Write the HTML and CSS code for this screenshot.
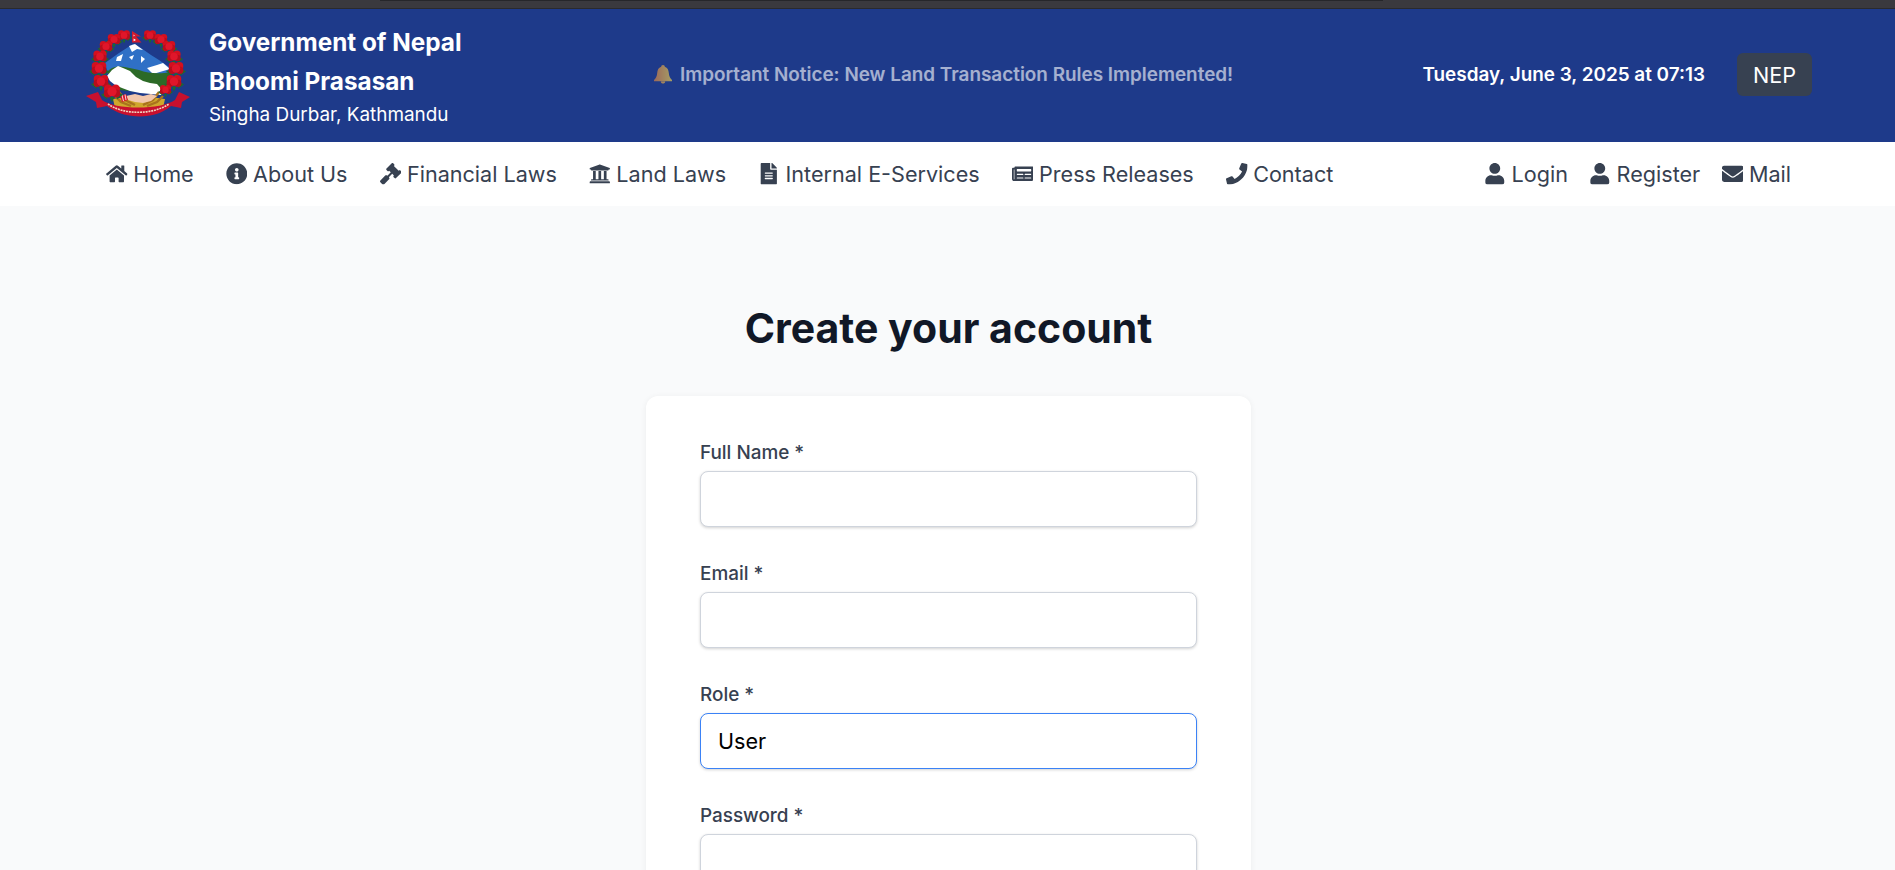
FILE: index.html
```html
<!DOCTYPE html>
<html lang="en">
<head>
<meta charset="utf-8">
<title>Create your account - Bhoomi Prasasan</title>
<link rel="stylesheet" href="styles.css">
</head>
<body>
<svg class="defs" width="0" height="0" aria-hidden="true">
  <symbol id="i-home" viewBox="0 0 576 512"><path d="M280.37 148.26L96 300.11V464a16 16 0 0 0 16 16l112.06-.29a16 16 0 0 0 15.92-16V368a16 16 0 0 1 16-16h64a16 16 0 0 1 16 16v95.64a16 16 0 0 0 16 16.05L464 480a16 16 0 0 0 16-16V300L295.67 148.26a12.19 12.19 0 0 0-15.3 0zM571.6 251.47L488 182.56V44.05a12 12 0 0 0-12-12h-56a12 12 0 0 0-12 12v72.61L318.47 43a48 48 0 0 0-61 0L4.34 251.47a12 12 0 0 0-1.6 16.9l25.5 31A12 12 0 0 0 45.15 301l235.22-193.74a12.19 12.19 0 0 1 15.3 0L530.9 301a12 12 0 0 0 16.9-1.6l25.5-31a12 12 0 0 0-1.7-16.93z"/></symbol>
  <symbol id="i-info" viewBox="0 0 512 512"><path d="M256 8C119.043 8 8 119.083 8 256c0 136.997 111.043 248 248 248s248-111.003 248-248C504 119.083 392.957 8 256 8zm0 110c23.196 0 42 18.804 42 42s-18.804 42-42 42-42-18.804-42-42 18.804-42 42-42zm56 254c0 6.627-5.373 12-12 12h-88c-6.627 0-12-5.373-12-12v-24c0-6.627 5.373-12 12-12h12v-64h-12c-6.627 0-12-5.373-12-12v-24c0-6.627 5.373-12 12-12h64c6.627 0 12 5.373 12 12v100h12c6.627 0 12 5.373 12 12v24z"/></symbol>
  <symbol id="i-gavel" viewBox="0 0 512 512"><path d="M504.971 199.362l-22.627-22.627c-9.373-9.373-24.569-9.373-33.941 0l-5.657 5.657L329.608 69.255l5.657-5.657c9.373-9.373 9.373-24.569 0-33.941L312.638 7.029c-9.373-9.373-24.569-9.373-33.941 0L154.246 131.48c-9.373 9.373-9.373 24.569 0 33.941l22.627 22.627c9.373 9.373 24.569 9.373 33.941 0l5.657-5.657 39.598 39.598-81.04 81.04-5.657-5.657c-12.497-12.497-32.758-12.497-45.255 0L9.373 412.118c-12.497 12.497-12.497 32.758 0 45.255l45.255 45.255c12.497 12.497 32.758 12.497 45.255 0l114.745-114.745c12.497-12.497 12.497-32.758 0-45.255l-5.657-5.657 81.04-81.04 39.598 39.598-5.657 5.657c-9.373 9.373-9.373 24.569 0 33.941l22.627 22.627c9.373 9.373 24.569 9.373 33.941 0l124.451-124.451c9.372-9.372 9.372-24.568 0-33.941z"/></symbol>
  <symbol id="i-bank" viewBox="0 0 512 512"><path d="M496 128v16a8 8 0 0 1-8 8h-24v12c0 6.627-5.373 12-12 12H60c-6.627 0-12-5.373-12-12v-12H24a8 8 0 0 1-8-8v-16a8 8 0 0 1 4.941-7.392l232-88a7.996 7.996 0 0 1 6.118 0l232 88A8 8 0 0 1 496 128zm-24 304H40c-13.255 0-24 10.745-24 24v16a8 8 0 0 0 8 8h464a8 8 0 0 0 8-8v-16c0-13.255-10.745-24-24-24zM96 192v192H60c-6.627 0-12 5.373-12 12v20h416v-20c0-6.627-5.373-12-12-12h-36V192h-64v192h-64V192h-64v192h-64V192H96z"/></symbol>
  <symbol id="i-file" viewBox="0 0 384 512"><path d="M224 136V0H24C10.7 0 0 10.7 0 24v464c0 13.3 10.7 24 24 24h336c13.3 0 24-10.7 24-24V160H248c-13.2 0-24-10.8-24-24zm64 236c0 6.6-5.4 12-12 12H108c-6.6 0-12-5.4-12-12v-8c0-6.6 5.4-12 12-12h168c6.6 0 12 5.4 12 12v8zm0-64c0 6.6-5.4 12-12 12H108c-6.6 0-12-5.4-12-12v-8c0-6.6 5.4-12 12-12h168c6.6 0 12 5.4 12 12v8zm0-72v8c0 6.6-5.4 12-12 12H108c-6.6 0-12-5.4-12-12v-8c0-6.6 5.4-12 12-12h168c6.6 0 12 5.4 12 12zm96-114.1v6.1H256V0h6.1c6.4 0 12.5 2.5 17 7l97.9 98c4.5 4.5 7 10.6 7 16.9z"/></symbol>
  <symbol id="i-news" viewBox="0 0 576 512"><path d="M552 64H88c-13.255 0-24 10.745-24 24v8H24c-13.255 0-24 10.745-24 24v272c0 30.928 25.072 56 56 56h472c26.51 0 48-21.49 48-48V88c0-13.255-10.745-24-24-24zM56 400a8 8 0 0 1-8-8V144h16v248a8 8 0 0 1-8 8zm236-16H140c-6.627 0-12-5.373-12-12v-8c0-6.627 5.373-12 12-12h152c6.627 0 12 5.373 12 12v8c0 6.627-5.373 12-12 12zm208 0H348c-6.627 0-12-5.373-12-12v-8c0-6.627 5.373-12 12-12h152c6.627 0 12 5.373 12 12v8c0 6.627-5.373 12-12 12zm-208-96H140c-6.627 0-12-5.373-12-12v-8c0-6.627 5.373-12 12-12h152c6.627 0 12 5.373 12 12v8c0 6.627-5.373 12-12 12zm208 0H348c-6.627 0-12-5.373-12-12v-8c0-6.627 5.373-12 12-12h152c6.627 0 12 5.373 12 12v8c0 6.627-5.373 12-12 12zm0-96H140c-6.627 0-12-5.373-12-12v-40c0-6.627 5.373-12 12-12h360c6.627 0 12 5.373 12 12v40c0 6.627-5.373 12-12 12z"/></symbol>
  <symbol id="i-phone" viewBox="0 0 512 512"><path d="M493.4 24.6l-104-24c-11.3-2.6-22.9 3.3-27.5 13.9l-48 112c-4.2 9.8-1.4 21.3 6.9 28l60.6 49.6c-36 76.7-98.9 140.5-177.2 177.2l-49.6-60.6c-6.8-8.3-18.2-11.1-28-6.9l-112 48C3.9 366.5-2 378.1.6 389.4l24 104C27.1 504.2 36.7 512 48 512c256.1 0 464-207.5 464-464 0-11.2-7.7-20.9-18.6-23.4z"/></symbol>
  <symbol id="i-user" viewBox="0 0 448 512"><path d="M224 256c70.7 0 128-57.3 128-128S294.7 0 224 0 96 57.3 96 128s57.3 128 128 128zm89.6 32h-16.7c-22.2 10.2-46.9 16-72.9 16s-50.6-5.8-72.9-16h-16.7C60.2 288 0 348.2 0 422.4V464c0 26.5 21.5 48 48 48h352c26.5 0 48-21.5 48-48v-41.6c0-74.2-60.2-134.4-134.4-134.4z"/></symbol>
  <symbol id="i-mail" viewBox="0 0 512 512"><path d="M502.3 190.8c3.9-3.1 9.7-.2 9.7 4.7V400c0 26.5-21.5 48-48 48H48c-26.5 0-48-21.5-48-48V195.6c0-5 5.7-7.8 9.7-4.7 22.4 17.4 52.1 39.5 154.1 113.6 21.1 15.4 56.7 47.8 92.2 47.6 35.7.3 72-32.8 92.3-47.6 102-74.1 131.6-96.3 154-113.7zM256 320c23.2.4 56.6-29.2 73.4-41.4 132.7-96.3 142.8-104.7 173.4-128.7 5.8-4.5 9.2-11.5 9.2-18.9v-19c0-26.5-21.5-48-48-48H48C21.5 64 0 85.5 0 112v19c0 7.4 3.4 14.3 9.2 18.9 30.6 23.9 40.7 32.4 173.4 128.7 16.8 12.2 50.2 41.8 73.4 41.4z"/></symbol>
  <symbol id="flower" viewBox="-9 -9 18 18" overflow="visible">
    <path d="M-9 3 L-3 0 L-4 7 Z M9 3 L3 0 L4 7 Z M-2 5 L0 9.5 L2 5 Z" fill="#1d6b2c"/>
    <circle cx="-3" cy="-1.8" r="3.6" fill="#d40f1e"/><circle cx="3" cy="-1.8" r="3.6" fill="#d40f1e"/><circle cx="-3.4" cy="2" r="3.3" fill="#b80d1c"/><circle cx="3.4" cy="2" r="3.3" fill="#b80d1c"/><circle cx="0" cy="0.5" r="3.8" fill="#e0162a"/>
  </symbol>
</svg>

<div class="chrome"><div class="chrome-tab"></div></div>

<header class="banner">
  <div class="brand">
    <svg class="emblem" viewBox="0 0 108 92" aria-label="Emblem of Nepal">
      <path d="M20 33 L34 23 L48 14 L56 18 L66 25 L74 30 L87 39 L82 48 L24 48 Z" fill="#2f70c6"/>
      <path d="M44 16 L50 14 L58 20 L52 19 L47 22 Z M32 27 L38 24 L36 31 L31 31 Z M56 26 L60 29 L56 33 Z M44 27 L49 25 L47 30 Z M62 38 L72 35 L78 33 L85 39 L68 44 Z" fill="#fff"/>
      <path d="M22 42 C30 32 44 38 54 40 C64 44 76 44 86 42 L86 58 L74 64 L34 60 Z" fill="#2c6a27"/>
      <path d="M22 46 L27 40 L33 36 L38 38 L45 41 L51 47 L58 51 L65 53 L72 54 L79 62 L76 65 L66 64 L55 63 L45 61 L37 58 L30 55 L25 51 Z" fill="#fff"/>
      <use href="#flower" x="31" y="-3" width="16" height="16"/><use href="#flower" x="57" y="-3" width="16" height="16"/>
      <use href="#flower" x="20.5" y="0.5" width="17" height="17"/><use href="#flower" x="67.5" y="0.5" width="17" height="17"/>
      <use href="#flower" x="12.5" y="7.5" width="17" height="17"/><use href="#flower" x="75.5" y="7.5" width="17" height="17"/>
      <use href="#flower" x="6" y="17" width="18" height="18"/><use href="#flower" x="80" y="17" width="18" height="18"/>
      <use href="#flower" x="4" y="28" width="20" height="20"/><use href="#flower" x="81" y="28" width="20" height="20"/>
      <use href="#flower" x="6" y="41" width="20" height="20"/><use href="#flower" x="79" y="41" width="20" height="20"/>
      <path d="M28 69 C36 67 70 67 80 69 L78 78 C66 84 42 84 30 78 Z" fill="#cfa72c"/>
      <path d="M30 66 L36 72 L46 76 M34 62 L40 70 L50 75 M78 66 L72 72 L62 76 M74 62 L68 70 L58 75" stroke="#a9721d" stroke-width="2.4" fill="none"/>
      <path d="M41 66 L50 64 L58 66 L66 64 L72 66 L66 71 L58 73 L50 72 L43 70 Z" fill="#f2c7ac"/>
      <path d="M35 66 L41 64 L43 70 L37 72 Z" fill="#d61a2c"/><path d="M37 65 L38.5 71 M40 64.5 L41 70" stroke="#fff" stroke-width="0.8"/>
      <use href="#flower" x="16" y="50" width="22" height="22"/>
      <use href="#flower" x="73" y="52" width="15" height="15"/>
      <path d="M1 66 L13 62 L17 70 C30 80 76 80 90 70 L94 62 L105 67 L97 72 L96 78 L86 76 C70 90 40 90 22 76 L12 78 L11 72 Z" fill="#c8102e"/>
      <path d="M23 74 C38 85 68 85 84 74" stroke="#f0d3bf" stroke-width="1.6" stroke-dasharray="2 0.8" fill="none"/>
      <path d="M47 1 L56 6.5 L51 6.5 L56.5 12.5 L47 12.5 Z" fill="#d11b2e"/>
      <path d="M48.6 4.5 L49.8 5.5 L48.6 6.5 Z M48.6 8.5 L51 10 L48.6 11.2 Z" fill="#fff"/>
    </svg>
    <div class="brand-text">
      <div class="brand-title">Government of Nepal</div>
      <div class="brand-title">Bhoomi Prasasan</div>
      <div class="brand-sub">Singha Durbar, Kathmandu</div>
    </div>
  </div>
  <div class="notice">
    <svg class="bell" viewBox="0 0 20 20" aria-hidden="true">
      <defs><linearGradient id="bell-g" x1="0" y1="0" x2="1" y2="0"><stop offset="0" stop-color="#f08a3a"/><stop offset="1" stop-color="#ffdf4d"/></linearGradient></defs>
      <path d="M10 1 C11.2 1 11.8 1.8 11.8 2.7 C14.6 3.6 15.6 6 15.8 9 C16 12.5 17.4 14.4 19 16 L19 17.2 L1 17.2 L1 16 C2.6 14.4 4 12.5 4.2 9 C4.4 6 5.4 3.6 8.2 2.7 C8.2 1.8 8.8 1 10 1 Z M7.8 17.6 H12.2 C12.2 19 11.2 19.6 10 19.6 C8.8 19.6 7.8 19 7.8 17.6 Z" fill="url(#bell-g)"/>
    </svg>
    <span>Important Notice: New Land Transaction Rules Implemented!</span>
  </div>
  <div class="banner-right">
    <span class="date">Tuesday, June 3, 2025 at 07:13</span>
    <button class="lang" type="button">NEP</button>
  </div>
</header>

<nav class="nav">
  <ul class="nav-list">
    <li><a href="#"><svg class="icon"><use href="#i-home"/></svg>Home</a></li>
    <li><a href="#"><svg class="icon"><use href="#i-info"/></svg>About Us</a></li>
    <li><a href="#"><svg class="icon"><use href="#i-gavel"/></svg>Financial Laws</a></li>
    <li><a href="#"><svg class="icon"><use href="#i-bank"/></svg>Land Laws</a></li>
    <li><a href="#"><svg class="icon"><use href="#i-file"/></svg>Internal E-Services</a></li>
    <li><a href="#"><svg class="icon"><use href="#i-news"/></svg>Press Releases</a></li>
    <li><a href="#"><svg class="icon"><use href="#i-phone"/></svg>Contact</a></li>
  </ul>
  <ul class="nav-list nav-list-right">
    <li><a href="#"><svg class="icon"><use href="#i-user"/></svg>Login</a></li>
    <li><a href="#"><svg class="icon"><use href="#i-user"/></svg>Register</a></li>
    <li><a href="#"><svg class="icon"><use href="#i-mail"/></svg>Mail</a></li>
  </ul>
</nav>

<main class="main">
  <h1 class="heading">Create your account</h1>
  <form class="card">
    <div class="field">
      <label class="label" for="name">Full Name *</label>
      <input class="input" id="name" type="text">
    </div>
    <div class="field">
      <label class="label" for="email">Email *</label>
      <input class="input" id="email" type="email">
    </div>
    <div class="field">
      <label class="label" for="role">Role *</label>
      <input class="input input-focus" id="role" type="text" value="User">
    </div>
    <div class="field">
      <label class="label" for="password">Password *</label>
      <input class="input" id="password" type="password">
    </div>
  </form>
</main>
</body>
</html>
```

FILE: styles.css
```css
* { box-sizing: border-box; }

html, body {
  margin: 0;
  height: 870px;
  overflow: hidden;
}

body {
  background: #f9fafb;
  font-family: Inter, "Liberation Sans", sans-serif;
  color: #374151;
}

.defs { display: block; height: 0; }

.chrome {
  height: 9px;
  background: #3a393e;
  border-bottom: 1px solid #2a2a2d;
}

.chrome-tab {
  width: 1003px;
  height: 1px;
  margin-left: 380px;
  background: #26262a;
}

.banner {
  height: 133px;
  background: #1e3a8a;
  display: flex;
  align-items: center;
  padding: 0 83px 0 85px;
  color: #fff;
}

.brand {
  display: flex;
  align-items: center;
  gap: 16px;
  width: 568px;
}

.emblem {
  width: 108px;
  height: 92px;
  flex: none;
}

.brand-text {
  display: flex;
  flex-direction: column;
  padding-bottom: 1px;
}

.brand-title {
  font-size: 24.3px;
  font-weight: 700;
  line-height: 39px;
}

.brand-sub {
  font-size: 18.9px;
  line-height: 27px;
}

.notice {
  display: flex;
  align-items: center;
  gap: 7px;
  padding-bottom: 3px;
  font-size: 18.9px;
  font-weight: 600;
  opacity: 0.6;
}

.bell { width: 20px; height: 20px; flex: none; }

.banner-right {
  margin-left: auto;
  display: flex;
  align-items: center;
  gap: 32px;
}

.date {
  font-size: 18.9px;
  font-weight: 600;
  padding-bottom: 2px;
}

.lang {
  width: 75px;
  height: 43px;
  margin-bottom: 2px;
  background: #374151;
  border: 0;
  border-radius: 6px;
  color: #fff;
  font: 400 21.6px Inter, sans-serif;
}

.nav {
  height: 64px;
  background: #fff;
  display: flex;
  align-items: center;
  justify-content: space-between;
  padding: 0 104px 0 106px;
}

.nav-list {
  display: flex;
  gap: 32.2px;
  list-style: none;
  margin: 0;
  padding: 0;
}

.nav-list-right { gap: 21.5px; }

.nav-list a {
  display: flex;
  align-items: center;
  gap: 5.6px;
  color: #374151;
  font-size: 21.6px;
  line-height: 30px;
  text-decoration: none;
}

.icon {
  width: 21.6px;
  height: 21.6px;
  fill: #374151;
  flex: none;
}

.main {
  display: flex;
  flex-direction: column;
  align-items: center;
  padding: 102px 0 0 2px;
}

.heading {
  margin: 0 0 48px;
  font-size: 41px;
  line-height: 40px;
  font-weight: 700;
  color: #111827;
}

.card {
  width: 605px;
  background: #fff;
  border-radius: 12px;
  box-shadow: 0 1px 6px rgba(0, 0, 0, 0.06);
  padding: 43px 54px;
}

.field { margin-bottom: 33px; }

.label {
  display: block;
  font-size: 18.9px;
  font-weight: 500;
  line-height: 28px;
  margin-bottom: 4px;
}

.input {
  display: block;
  width: 100%;
  height: 56px;
  padding: 0 17px;
  border: 1px solid #cfd4dc;
  border-radius: 8px;
  background: #fff;
  box-shadow: 0 1px 3px rgba(0, 0, 0, 0.18);
  font: 400 21.6px Inter, sans-serif;
  color: #000;
  outline: none;
}

.input-focus { border-color: #3b82f6; }
```
